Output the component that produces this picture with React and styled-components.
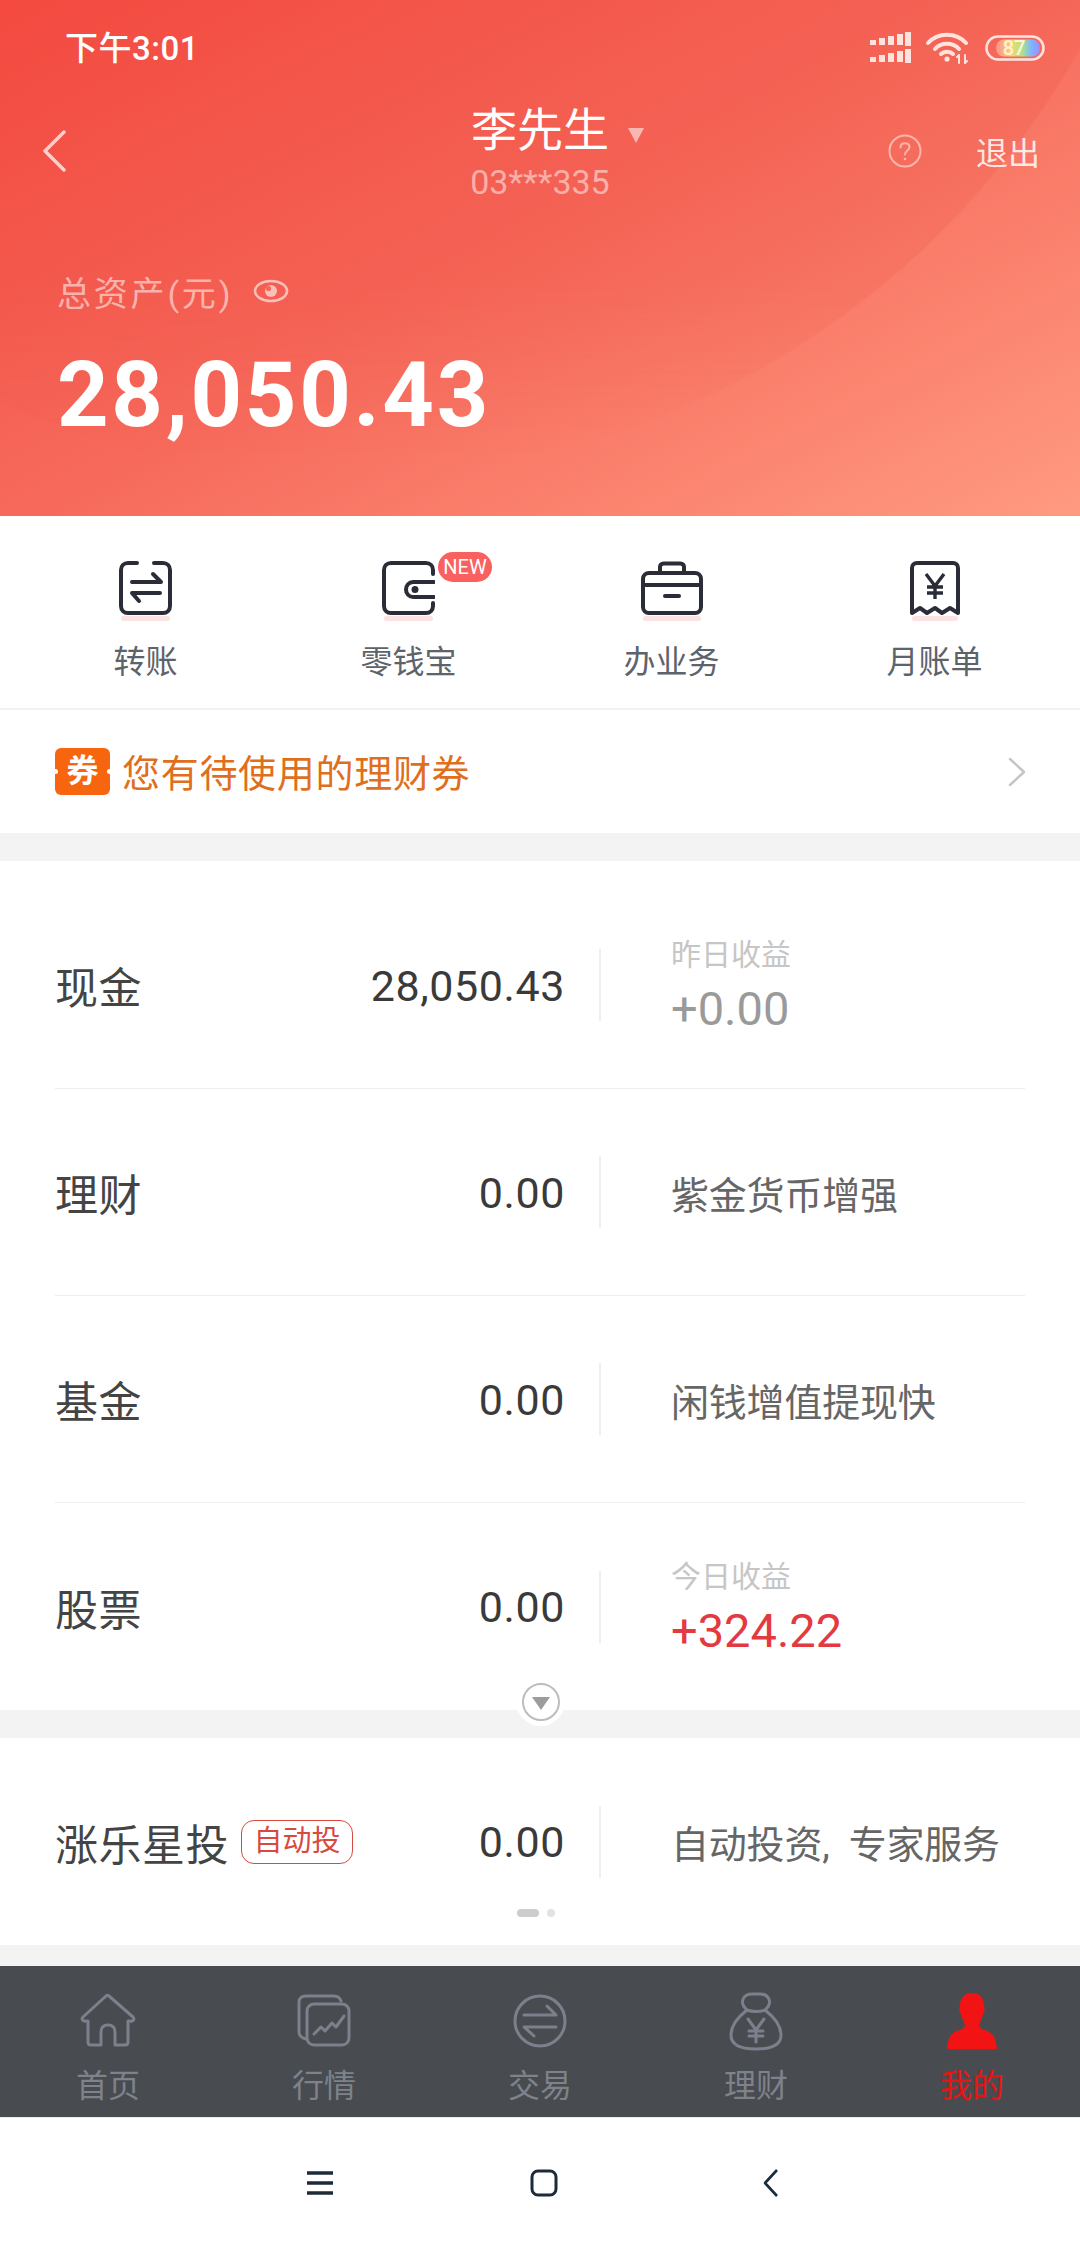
import React from "react";
import styled, { createGlobalStyle } from "styled-components";

const GlobalStyle = createGlobalStyle`
  html, body {
    margin: 0;
    padding: 0;
    background: #f3f3f3;
  }
  * {
    box-sizing: border-box;
  }
`;

const FONT = `Roboto, "Noto Sans CJK SC", sans-serif`;

const Page = styled.div`
  width: 1080px;
  height: 2248px;
  display: flex;
  flex-direction: column;
  overflow: hidden;
  background: #f3f3f3;
  font-family: ${FONT};
`;

/* header */
const Header = styled.header`
  position: relative;
  isolation: isolate;
  height: 516px;
  flex: none;
  color: #fff;
  background: linear-gradient(152deg, #f54c43 0%, #f6695b 48%, #ff9a80 100%);
  &::before {
    content: "";
    position: absolute;
    inset: 0;
    z-index: -1;
    background: radial-gradient(circle 840px at 348px -362px, rgba(232, 58, 48, 0.12) 99.8%, transparent 100%);
    -webkit-mask-image: linear-gradient(to bottom, #000 55%, transparent 88%);
    mask-image: linear-gradient(to bottom, #000 55%, transparent 88%);
  }
`;

const StatusBar = styled.div`
  height: 96px;
  padding: 0 35px 0 65px;
  display: flex;
  align-items: center;
  justify-content: space-between;
`;

const Time = styled.span`
  margin-top: -5px;
  font-size: 33px;
  font-weight: 500;
  letter-spacing: 0.5px;
`;

const StatusIcons = styled.div`
  display: flex;
  align-items: center;
  gap: 15px;
`;

const NavRow = styled.div`
  margin-top: 4px;
  height: 102px;
  display: grid;
  grid-template-columns: 1fr auto 1fr;
  align-items: center;
`;

const BackButton = styled.div`
  padding-left: 41px;
  display: flex;
`;

const Account = styled.div`
  position: relative;
  text-align: center;
`;

const AccountName = styled.div`
  font-size: 46px;
  line-height: 60px;
`;

const AccountCaret = styled.span`
  position: absolute;
  top: 28px;
  right: -34px;
  width: 0;
  height: 0;
  border-left: 8px solid transparent;
  border-right: 8px solid transparent;
  border-top: 15px solid rgba(255, 255, 255, 0.55);
`;

const AccountNo = styled.div`
  margin-top: 2px;
  font-size: 34px;
  line-height: 40px;
  color: rgba(255, 255, 255, 0.5);
`;

const NavActions = styled.div`
  padding-right: 40px;
  display: flex;
  justify-content: flex-end;
  align-items: center;
  gap: 54px;
`;

const Logout = styled.span`
  font-size: 32px;
  color: rgba(255, 255, 255, 0.85);
`;

const Assets = styled.div`
  margin-top: 67px;
  padding-left: 57px;
`;

const AssetLabel = styled.div`
  height: 44px;
  display: flex;
  align-items: center;
  gap: 20px;
  font-size: 34px;
  letter-spacing: 2.8px;
  color: rgba(255, 255, 255, 0.55);
`;

const AssetAmount = styled.div`
  margin-top: 33px;
  font-size: 90px;
  line-height: 100px;
  font-weight: 700;
  letter-spacing: 2.7px;
`;

/* shortcuts */
const Shortcuts = styled.nav`
  height: 194px;
  flex: none;
  padding: 45px 14px 0;
  display: grid;
  grid-template-columns: repeat(4, 1fr);
  background: #fff;
  border-bottom: 2px solid #f1f1f1;
`;

const Shortcut = styled.div`
  display: flex;
  flex-direction: column;
  align-items: center;
`;

const ShortcutIcon = styled.div`
  position: relative;
  height: 60px;
  display: flex;
`;

const NewBadge = styled.span`
  position: absolute;
  top: -9px;
  left: 56px;
  width: 54px;
  height: 30px;
  border-radius: 15px;
  background: #f96060;
  color: #fff;
  font-size: 20px;
  line-height: 30px;
  text-align: center;
`;

const ShortcutLabel = styled.span`
  margin-top: 19px;
  font-size: 32px;
  line-height: 44px;
  color: #5d636b;
`;

/* coupon */
const CouponBar = styled.div`
  height: 123px;
  flex: none;
  padding: 0 54px 0 55px;
  display: flex;
  align-items: center;
  background: #fff;
`;

const CouponMark = styled.span`
  position: relative;
  width: 55px;
  height: 47px;
  border-radius: 6px;
  background: #f7660f;
  color: #fff;
  font-size: 32px;
  font-weight: 700;
  line-height: 47px;
  text-align: center;
  &::before,
  &::after {
    content: "";
    position: absolute;
    top: 21px;
    width: 5px;
    height: 5px;
    border-radius: 50%;
    background: #fff;
  }
  &::before {
    left: -2px;
  }
  &::after {
    right: -2px;
  }
`;

const CouponText = styled.span`
  flex: 1;
  margin-top: -2px;
  margin-left: 12px;
  font-size: 38px;
  letter-spacing: 0.7px;
  color: #df6f1d;
`;

/* asset rows */
const Section = styled.section`
  position: relative;
  flex: none;
  margin-top: ${(p) => p.$gap}px;
  padding: ${(p) => p.$top}px 55px 0;
  background: #fff;
`;

const Row = styled.div`
  height: 207px;
  display: flex;
  align-items: center;
  border-bottom: ${(p) => (p.$last ? "none" : "1px solid #eeeeee")};
`;

const RowLeft = styled.div`
  width: 510px;
  display: flex;
  align-items: center;
  justify-content: space-between;
`;

const RowName = styled.div`
  display: flex;
  align-items: center;
  gap: 12px;
  font-size: 43px;
  letter-spacing: 0.5px;
  color: #444;
`;

const Tag = styled.span`
  width: 112px;
  height: 44px;
  border: 1px solid #d84a3f;
  border-radius: 13px;
  color: #d84a3f;
  font-size: 29px;
  letter-spacing: 0;
  line-height: 41px;
  text-align: center;
`;

const RowValue = styled.span`
  margin-top: 1px;
  font-size: 43px;
  letter-spacing: 0.6px;
  color: #3a3a3a;
`;

const RowDivider = styled.span`
  width: 2px;
  height: 72px;
  margin: 0 70px 0 34px;
  background: #efefef;
`;

const RowInfo = styled.div`
  display: flex;
  flex-direction: column;
`;

const InfoLabel = styled.span`
  margin-top: 3px;
  font-size: 30px;
  line-height: 36px;
  color: #c6c6c6;
`;

const InfoValue = styled.span`
  margin-top: 9px;
  font-size: 47px;
  line-height: 54px;
  color: ${(p) => (p.$up ? "#e33a41" : "#9a9a9a")};
`;

const InfoText = styled.span`
  font-size: 38px;
  letter-spacing: -0.2px;
  word-spacing: 10px;
  color: #666;
`;

const ExpandButton = styled.div`
  position: absolute;
  left: 516px;
  bottom: -16px;
  width: 49px;
  height: 49px;
  border-radius: 50%;
  background: #fff;
  display: flex;
  align-items: center;
  justify-content: center;
`;

const ExpandRing = styled.span`
  width: 38px;
  height: 38px;
  border: 2px solid #bdbdbd;
  border-radius: 50%;
  display: flex;
  align-items: center;
  justify-content: center;
  &::after {
    content: "";
    margin-top: 4px;
    border-left: 9px solid transparent;
    border-right: 9px solid transparent;
    border-top: 13px solid #9c9c9c;
  }
`;

const Pager = styled.div`
  position: absolute;
  left: 517px;
  bottom: 28px;
  display: flex;
  gap: 8px;
`;

const PagerDot = styled.span`
  width: ${(p) => (p.$active ? 22 : 8)}px;
  height: 8px;
  border-radius: 4px;
  background: ${(p) => (p.$active ? "#cccccc" : "#e2e2e2")};
`;

/* bottom tabs */
const TabBar = styled.nav`
  margin-top: 21px;
  height: 151px;
  flex: none;
  padding-top: 26px;
  display: grid;
  grid-template-columns: repeat(5, 216px);
  background: #484b4f;
`;

const Tab = styled.div`
  display: flex;
  flex-direction: column;
  align-items: center;
`;

const TabIcon = styled.div`
  height: 60px;
  display: flex;
`;

const TabLabel = styled.span`
  margin-top: 12px;
  font-size: 32px;
  line-height: 44px;
  color: ${(p) => (p.$active ? "#e81414" : "#7d828b")};
`;

const SystemNav = styled.div`
  flex: 1;
  padding-left: 306px;
  display: flex;
  align-items: center;
  gap: 196px;
  background: #fff;
  border-top: 1px solid #ececec;
`;

const BackGlyphSlot = styled.span`
  margin-left: 9px;
  display: flex;
`;

const Stroke = styled.svg`
  display: block;
  fill: none;
  stroke: ${(p) => p.$color || "#2a2c38"};
  stroke-width: ${(p) => p.$width || 4};
  stroke-linecap: round;
  stroke-linejoin: round;
`;

const PINK = "#fbe3e3";

const Signal = () => (
  <svg width="41" height="32" viewBox="0 0 41 32" fill="#ffe3df">
    {[0, 17].map((top) => (
      <g key={top}>
        <rect x="0" y={top + 8} width="6" height="5" />
        <rect x="9" y={top + 6} width="6" height="7" />
        <rect x="18" y={top + 4} width="6" height="9" />
        <rect x="27" y={top + 2} width="6" height="11" />
        <rect x="35" y={top} width="6" height="14" />
      </g>
    ))}
  </svg>
);

const Wifi = () => (
  <svg width="44" height="32" viewBox="0 0 44 32" fill="none" stroke="#ffe3df" strokeWidth="4" strokeLinecap="round">
    <path d="M2 11C12 0 30 0 40 11" />
    <path d="M9 17C15 10 27 10 33 17" />
    <path d="M15 22C18 19 24 19 27 22" />
    <circle cx="21" cy="27" r="2.6" fill="#ffe3df" stroke="none" />
    <path d="M33 23V31M39 23V31" strokeWidth="2" />
    <path d="M31 25L33 23M39 31L41 29" strokeWidth="2" />
  </svg>
);

const Battery = () => (
  <svg width="60" height="26" viewBox="0 0 60 26">
    <defs>
      <linearGradient id="rainbow" x1="0" x2="1" y1="0" y2="0">
        <stop offset="0" stopColor="#ff8f8f" />
        <stop offset="0.35" stopColor="#f9d86c" />
        <stop offset="0.6" stopColor="#a6e58a" />
        <stop offset="0.8" stopColor="#7fb5ff" />
        <stop offset="1" stopColor="#9c8cff" />
      </linearGradient>
    </defs>
    <rect x="1.5" y="1.5" width="57" height="23" rx="11.5" fill="none" stroke="#ffe3df" strokeWidth="2.5" />
    <rect x="11" y="4.5" width="44" height="17" rx="8" fill="url(#rainbow)" />
    <text x="29" y="20" textAnchor="middle" fontSize="20" fontWeight="500" fontFamily="Roboto, sans-serif" fill="#fff3d8">87</text>
  </svg>
);

const BackArrow = () => (
  <Stroke width="26" height="42" viewBox="0 0 26 42" $color="rgba(255,255,255,0.72)" $width="3.4">
    <path d="M23 2L4 21L23 40" />
  </Stroke>
);

const HelpIcon = () => (
  <svg width="34" height="34" viewBox="0 0 34 34" fill="none" stroke="rgba(255,255,255,0.5)" strokeWidth="2" strokeLinecap="round">
    <circle cx="17" cy="17" r="15.5" />
    <path d="M12.5 13.5C12.5 7.5 21.5 8 21.5 13C21.5 16.5 17 16.5 17 20.5" />
    <circle cx="17" cy="25" r="1.3" fill="rgba(255,255,255,0.5)" stroke="none" />
  </svg>
);

const EyeIcon = () => (
  <svg width="36" height="24" viewBox="0 0 36 24" fill="none">
    <ellipse cx="18" cy="12" rx="16" ry="10" stroke="rgba(255,255,255,0.6)" strokeWidth="2.6" />
    <circle cx="18" cy="12" r="6" fill="rgba(255,255,255,0.6)" />
    <circle cx="15.5" cy="9.5" r="2.6" fill="#f4695c" />
  </svg>
);

const ShadowBand = ({ width, x = 0 }) => <rect x={x} y="55" width={width} height="5" rx="2" fill={PINK} stroke="none" />;

const TransferIcon = () => (
  <Stroke width="53" height="60" viewBox="0 0 53 60">
    <ShadowBand width="49" x="2" />
    <path d="M18 2H9C5 2 2 5 2 9V45C2 49 5 52 9 52H44C48 52 51 49 51 45V9C51 5 48 2 44 2H35" />
    <path d="M13 21H42L34 13" />
    <path d="M41 32H13L20 40" />
  </Stroke>
);

const WalletIcon = () => (
  <Stroke width="53" height="60" viewBox="0 0 53 60">
    <ShadowBand width="49" x="2" />
    <path d="M51 13V9C51 5 48 2 44 2H9C5 2 2 5 2 9V45C2 49 5 52 9 52H44C48 52 51 49 51 45V42" />
    <path d="M52 21H31C27 21 24 24.5 24 28.5C24 32.5 27 36 31 36H52" />
    <circle cx="33" cy="28.500" r="1.500" fill="#2a2c38" />
  </Stroke>
);

const CaseIcon = () => (
  <Stroke width="62" height="60" viewBox="0 0 62 60">
    <ShadowBand width="58" x="2" />
    <path d="M19 11V6C19 4 20.500 2.500 22.500 2.500H39.500C41.500 2.500 43 4 43 6V11" />
    <rect x="2" y="12" width="58" height="40" rx="6" />
    <path d="M2 24H60" />
    <path d="M24 35H38" />
  </Stroke>
);

const ReceiptIcon = () => (
  <Stroke width="50" height="60" viewBox="0 0 50 60">
    <ShadowBand width="46" x="2" />
    <path d="M2 52V7C2 4 4 2 7 2H43C46 2 48 4 48 7V52L40 47L32 52L25 47L17 52L10 47Z" />
    <path d="M16 13L25 25L34 13M25 25V38M17 26H33M17 32H33" strokeWidth="3.4" strokeLinecap="butt" />
  </Stroke>
);

const HomeIcon = () => (
  <Stroke width="56" height="60" viewBox="0 0 56 60" $color="#7d808c" $width="3">
    <path d="M29 4C28 3 27 3 26 4L3 25C1 27 3 30 6 29H8V50C8 52 9 53 11 53H21V40C21 35 24 33 28 33C32 33 35 35 35 40V53H45C47 53 48 52 48 50V29H50C53 30 55 27 53 25Z" />
  </Stroke>
);

const MarketIcon = () => (
  <Stroke width="54" height="60" viewBox="0 0 54 60" $color="#7d808c" $width="3">
    <path d="M9 47C5 46 2 44 2 40V10C2 6 5 4 9 4H37C40 4 43 6 44 9" />
    <rect x="10" y="12" width="42" height="41" rx="7" />
    <path d="M17 42L24 35L28 39L35 31L39 35L47 24" />
  </Stroke>
);

const ExchangeIcon = () => (
  <Stroke width="54" height="60" viewBox="0 0 54 60" $color="#7d808c" $width="3">
    <circle cx="27" cy="29" r="25" />
    <path d="M11 23H43L34 14" />
    <path d="M43 35H11L21 44" />
  </Stroke>
);

const BagIcon = () => (
  <Stroke width="54" height="60" viewBox="0 0 54 60" $color="#7d808c" $width="3">
    <path d="M18 18C9 10 15 2 23 2H31C39 2 45 10 36 18C45 25 52 33 52 43C52 53 42 57 27 57C12 57 2 53 2 43C2 33 9 25 18 18C23 20 31 20 36 18" />
    <path d="M19 27L27 38L35 27M27 38V50M20 39H34M20 44H34" />
  </Stroke>
);

const PersonIcon = () => (
  <svg width="50" height="60" viewBox="0 0 50 60" fill="#f21414">
    <path d="M25 1C34 1 37 7 37 14C38 16 38 20 36 22C35 27 33 30 32 33C32 36 35 37 40 39C46 41 49 46 50 57H0C1 46 4 41 10 39C15 37 18 36 18 33C17 30 15 27 14 22C12 20 12 16 13 14C13 7 16 1 25 1Z" />
  </svg>
);

const MenuGlyph = () => (
  <Stroke width="28" height="24" viewBox="0 0 28 24" $color="#1c2b3a" $width="3.4">
    <path d="M1 2H27M1 12H27M1 22H27" strokeLinecap="butt" />
  </Stroke>
);

const HomeGlyph = () => (
  <Stroke width="28" height="28" viewBox="0 0 28 28" $color="#1c2b3a" $width="3">
    <rect x="2" y="2" width="24" height="24" rx="6" />
  </Stroke>
);

const BackGlyph = () => (
  <Stroke width="16" height="28" viewBox="0 0 16 28" $color="#1c2b3a" $width="2.6">
    <path d="M14 1L2 14L14 27" strokeLinecap="butt" />
  </Stroke>
);

const ForwardChevron = () => (
  <Stroke width="18" height="30" viewBox="0 0 18 30" $color="#c4c4c4" $width="2.4">
    <path d="M2 2L16 15L2 28" />
  </Stroke>
);

const shortcuts = [
  { label: "转账", icon: <TransferIcon /> },
  { label: "零钱宝", icon: <WalletIcon />, badge: "NEW" },
  { label: "办业务", icon: <CaseIcon /> },
  { label: "月账单", icon: <ReceiptIcon /> },
];

const rows = [
  { name: "现金", value: "28,050.43", infoLabel: "昨日收益", infoValue: "+0.00" },
  { name: "理财", value: "0.00", text: "紫金货币增强" },
  { name: "基金", value: "0.00", text: "闲钱增值提现快" },
  { name: "股票", value: "0.00", infoLabel: "今日收益", infoValue: "+324.22", up: true },
];

const tabs = [
  { label: "首页", icon: <HomeIcon /> },
  { label: "行情", icon: <MarketIcon /> },
  { label: "交易", icon: <ExchangeIcon /> },
  { label: "理财", icon: <BagIcon /> },
  { label: "我的", icon: <PersonIcon />, active: true },
];

const AssetRow = ({ row, last }) => (
  <Row $last={last}>
    <RowLeft>
      <RowName>
        {row.name}
        {row.tag && <Tag>{row.tag}</Tag>}
      </RowName>
      <RowValue>{row.value}</RowValue>
    </RowLeft>
    <RowDivider />
    {row.text ? (
      <InfoText>{row.text}</InfoText>
    ) : (
      <RowInfo>
        <InfoLabel>{row.infoLabel}</InfoLabel>
        <InfoValue $up={row.up}>{row.infoValue}</InfoValue>
      </RowInfo>
    )}
  </Row>
);

export default function App() {
  return (
    <Page>
      <GlobalStyle />
      <Header>
        <StatusBar>
          <Time>下午3:01</Time>
          <StatusIcons>
            <Signal />
            <Wifi />
            <Battery />
          </StatusIcons>
        </StatusBar>
        <NavRow>
          <BackButton>
            <BackArrow />
          </BackButton>
          <Account>
            <AccountName>李先生</AccountName>
            <AccountCaret />
            <AccountNo>03***335</AccountNo>
          </Account>
          <NavActions>
            <HelpIcon />
            <Logout>退出</Logout>
          </NavActions>
        </NavRow>
        <Assets>
          <AssetLabel>
            总资产(元)
            <EyeIcon />
          </AssetLabel>
          <AssetAmount>28,050.43</AssetAmount>
        </Assets>
      </Header>

      <Shortcuts>
        {shortcuts.map((item) => (
          <Shortcut key={item.label}>
            <ShortcutIcon>
              {item.icon}
              {item.badge && <NewBadge>{item.badge}</NewBadge>}
            </ShortcutIcon>
            <ShortcutLabel>{item.label}</ShortcutLabel>
          </Shortcut>
        ))}
      </Shortcuts>

      <CouponBar>
        <CouponMark>券</CouponMark>
        <CouponText>您有待使用的理财券</CouponText>
        <ForwardChevron />
      </CouponBar>

      <Section $gap={28} $top={21}>
        {rows.map((row, i) => (
          <AssetRow key={row.name} row={row} last={i === rows.length - 1} />
        ))}
        <ExpandButton>
          <ExpandRing />
        </ExpandButton>
      </Section>

      <Section $gap={28} $top={0}>
        <AssetRow
          last
          row={{ name: "涨乐星投", tag: "自动投", value: "0.00", text: "自动投资, 专家服务" }}
        />
        <Pager>
          <PagerDot $active />
          <PagerDot />
        </Pager>
      </Section>

      <TabBar>
        {tabs.map((tab) => (
          <Tab key={tab.label}>
            <TabIcon>{tab.icon}</TabIcon>
            <TabLabel $active={tab.active}>{tab.label}</TabLabel>
          </Tab>
        ))}
      </TabBar>

      <SystemNav>
        <MenuGlyph />
        <HomeGlyph />
        <BackGlyphSlot>
          <BackGlyph />
        </BackGlyphSlot>
      </SystemNav>
    </Page>
  );
}
